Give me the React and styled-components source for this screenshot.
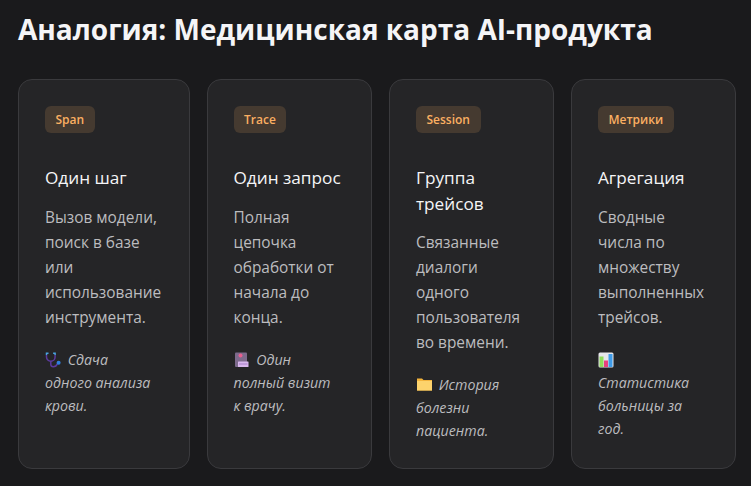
import React from "react";
import styled, { createGlobalStyle } from "styled-components";

const GlobalStyle = createGlobalStyle`
  html, body {
    margin: 0;
    padding: 0;
    background: #1a1a1c;
  }
  * {
    box-sizing: border-box;
  }
`;

const Page = styled.div`
  width: 751px;
  height: 486px;
  overflow: hidden;
  padding: 12px 15px 18px 18px;
  background: #1a1a1c;
  font-family: "Open Sans", "Noto Sans", sans-serif;
`;

const Title = styled.h1`
  margin: 0 0 33px;
  height: 34px;
  font-size: 28px;
  line-height: 35px;
  font-weight: 700;
  color: #f5f5f7;
`;

const Cards = styled.div`
  display: grid;
  grid-template-columns: 171.5px 165.5px 165px 165px;
  column-gap: 17px;
  height: 389px;
`;

const Card = styled.section`
  padding: 26px;
  background: #252527;
  border: 1px solid #3a3a3d;
  border-radius: 14px;
`;

const Badge = styled.span`
  display: inline-block;
  height: 27px;
  padding: 0 10.5px;
  font-size: 12px;
  line-height: 28px;
  font-weight: 600;
  color: #fbaf62;
  background: #453a30;
  border-radius: 6px;
`;

const CardTitle = styled.h3`
  margin: 32px 0 14px;
  font-size: 17.2px;
  line-height: 25.5px;
  font-weight: 400;
  color: #f5f5f7;
`;

const Text = styled.p`
  margin: 0 0 18px;
  font-size: 15.4px;
  line-height: 25px;
  color: #bcbcbf;
`;

const Note = styled.p`
  margin: 0;
  max-width: 110px;
  font-size: 14.2px;
  line-height: 23px;
  font-style: italic;
  color: #bcbcbf;
`;

const Glyph = styled.svg`
  width: 16px;
  height: 16px;
  margin-right: 3px;
  vertical-align: -3px;
`;

const Stethoscope = () => (
  <Glyph viewBox="0 0 16 16" fill="none">
    <path d="M1.5 3v2a4.3 4.3 0 0 0 8.6 0V3" stroke="#5b3a9e" strokeWidth="1.5" />
    <path d="M5.8 9v3.5q0 2.2 2.5 2.2q3 0 4-3" stroke="#5b3a9e" strokeWidth="1.5" />
    <path d="M1.5 3V1.2h2M10.1 3V1.2h-2" stroke="#4aa3df" strokeWidth="1.5" />
    <circle cx="13.6" cy="10.8" r="2" fill="#2f7fe0" />
  </Glyph>
);

const Scroll = () => (
  <Glyph viewBox="0 0 16 16">
    <rect x="1" y="0.5" width="12" height="14.5" rx="1" fill="#7d6a8c" />
    <rect x="4" y="9.5" width="10.5" height="5.5" rx="0.5" fill="#d9b8ee" />
    <rect x="5" y="11.5" width="8.5" height="1" fill="#a77fc8" />
    <circle cx="6.5" cy="3.5" r="2" fill="#e75f8f" />
  </Glyph>
);

const Folder = () => (
  <Glyph viewBox="0 0 16 16">
    <path d="M1 1.5h5l1.5 1.5H16V13.5H1z" fill="#f4b43c" />
    <rect x="1" y="4" width="15" height="9.5" fill="#fdd36c" />
  </Glyph>
);

const BarChart = () => (
  <Glyph viewBox="0 0 16 16">
    <rect x="0.5" y="0.5" width="15" height="15" rx="1.5" fill="#e6e6ea" />
    <rect x="1.5" y="4.5" width="4" height="10.5" fill="#8fdc5a" />
    <rect x="6" y="8.5" width="4" height="6.5" fill="#e8407f" />
    <rect x="10.5" y="2" width="4" height="13" fill="#3f9be8" />
  </Glyph>
);

const items = [
  {
    badge: "Span",
    title: "Один шаг",
    text: "Вызов модели, поиск в базе или использование инструмента.",
    icon: <Stethoscope />,
    note: "Сдача одного анализа крови.",
  },
  {
    badge: "Trace",
    title: "Один запрос",
    text: "Полная цепочка обработки от начала до конца.",
    icon: <Scroll />,
    note: "Один полный визит к\u00a0врачу.",
  },
  {
    badge: "Session",
    title: "Группа трейсов",
    text: "Связанные диалоги одного пользователя во времени.",
    icon: <Folder />,
    note: "История болезни пациента.",
  },
  {
    badge: "Метрики",
    title: "Агрегация",
    text: "Сводные числа по множеству выполненных трейсов.",
    icon: <BarChart />,
    note: "Статистика больницы за год.",
  },
];

export default function App() {
  return (
    <Page>
      <GlobalStyle />
      <Title>Аналогия: Медицинская карта AI-продукта</Title>
      <Cards>
        {items.map((item) => (
          <Card key={item.badge}>
            <Badge>{item.badge}</Badge>
            <CardTitle>{item.title}</CardTitle>
            <Text>{item.text}</Text>
            <Note>
              {item.icon} {item.note}
            </Note>
          </Card>
        ))}
      </Cards>
    </Page>
  );
}
